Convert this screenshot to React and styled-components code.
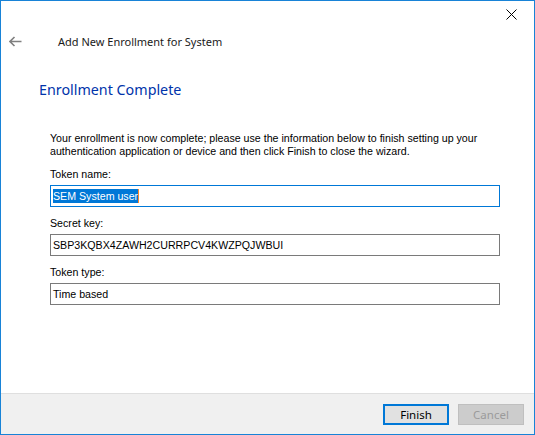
import React from 'react';
import styled, { createGlobalStyle } from 'styled-components';

const GlobalStyle = createGlobalStyle`
  html, body {
    margin: 0;
    padding: 0;
    background: #ffffff;
  }
`;

const Window = styled.div`
  width: 535px;
  height: 435px;
  box-sizing: border-box;
  border: 1px solid #1883d7;
  background: #ffffff;
  display: flex;
  flex-direction: column;
  font-family: "Noto Sans", "Open Sans", sans-serif;
`;

const TitleBar = styled.div`
  height: 26px;
  display: flex;
  justify-content: flex-end;
  align-items: center;
`;

const CloseButton = styled.button`
  width: 46px;
  height: 26px;
  border: none;
  background: transparent;
  padding: 0;
  display: flex;
  align-items: center;
  justify-content: center;
`;

const Header = styled.div`
  height: 28px;
  display: flex;
  align-items: center;
  padding-left: 8px;
`;

const BackButton = styled.span`
  width: 14px;
  display: flex;
  align-items: center;
`;

const HeaderTitle = styled.span`
  margin-left: 35px;
  font-size: 11px;
  color: #1a1a1a;
`;

const Content = styled.div`
  padding: 0 35px 0 49px;
  display: flex;
  flex-direction: column;
`;

const Heading = styled.h1`
  margin: 25px 0 0 -11px;
  font-size: 14.3px;
  font-weight: normal;
  color: #0033aa;
  line-height: 20px;
`;

const Intro = styled.p`
  margin: 32px 0 0;
  font-family: "Liberation Sans", Arial, sans-serif;
  font-size: 10.65px;
  line-height: 13px;
  color: #000000;
`;

const Label = styled.label`
  display: block;
  margin-top: ${(p) => p.$top}px;
  font-family: "Liberation Sans", Arial, sans-serif;
  font-size: 10.65px;
  line-height: 13px;
  color: #000000;
`;

const Field = styled.div`
  margin-top: 4px;
  height: 22px;
  box-sizing: border-box;
  border: 1px solid ${(p) => (p.$focused ? '#0078d7' : '#7a7a7a')};
  display: flex;
  align-items: center;
  padding-left: 2px;
  font-family: "Liberation Sans", Arial, sans-serif;
  font-size: 10.65px;
  color: #000000;
  width: 450px;
`;

const Selected = styled.span`
  background: #0078d7;
  color: #ffffff;
  line-height: 14px;
  position: relative;
  padding-right: 1px;
`;

const Caret = styled.span`
  position: absolute;
  right: 0;
  top: 0;
  width: 1px;
  height: 14px;
  background: #ff8728;
`;

const Footer = styled.div`
  margin-top: auto;
  height: 41px;
  box-sizing: border-box;
  border-top: 1px solid #dfdfdf;
  background: #f0f0f0;
  display: flex;
  justify-content: flex-end;
  align-items: center;
  gap: 9px;
  padding-right: 10px;
`;

const Button = styled.button`
  width: 66px;
  height: 21px;
  box-sizing: border-box;
  font-family: "Noto Sans", "Open Sans", sans-serif;
  font-size: 11.5px;
  padding: 0;
  border: ${(p) => (p.$primary ? '2px solid #0078d7' : '1px solid #bfbfbf')};
  background: ${(p) => (p.$primary ? '#e1e1e1' : '#cccccc')};
  color: ${(p) => (p.disabled ? '#9b9b9b' : '#000000')};
`;

export default function App() {
  return (
    <>
      <GlobalStyle />
      <Window>
        <TitleBar>
          <CloseButton aria-label="Close">
            <svg width="11" height="11" viewBox="0 0 11 11">
              <path d="M0.5 0.5 L10.5 10.5 M10.5 0.5 L0.5 10.5" stroke="#000" strokeWidth="1" />
            </svg>
          </CloseButton>
        </TitleBar>
        <Header>
          <BackButton>
            <svg width="13" height="11" viewBox="0 0 13 11">
              <path d="M1 5.5 H12.5 M5.5 1 L1 5.5 L5.5 10" stroke="#808080" strokeWidth="1.6" fill="none" />
            </svg>
          </BackButton>
          <HeaderTitle>Add New Enrollment for System</HeaderTitle>
        </Header>
        <Content>
          <Heading>Enrollment Complete</Heading>
          <Intro>
            Your enrollment is now complete; please use the information below to finish setting up your
            <br />
            authentication application or device and then click Finish to close the wizard.
          </Intro>
          <Label $top={10}>Token name:</Label>
          <Field $focused>
            <Selected>
              SEM System user
              <Caret />
            </Selected>
          </Field>
          <Label $top={10}>Secret key:</Label>
          <Field>SBP3KQBX4ZAWH2CURRPCV4KWZPQJWBUI</Field>
          <Label $top={10}>Token type:</Label>
          <Field>Time based</Field>
        </Content>
        <Footer>
          <Button $primary>Finish</Button>
          <Button disabled>Cancel</Button>
        </Footer>
      </Window>
    </>
  );
}
